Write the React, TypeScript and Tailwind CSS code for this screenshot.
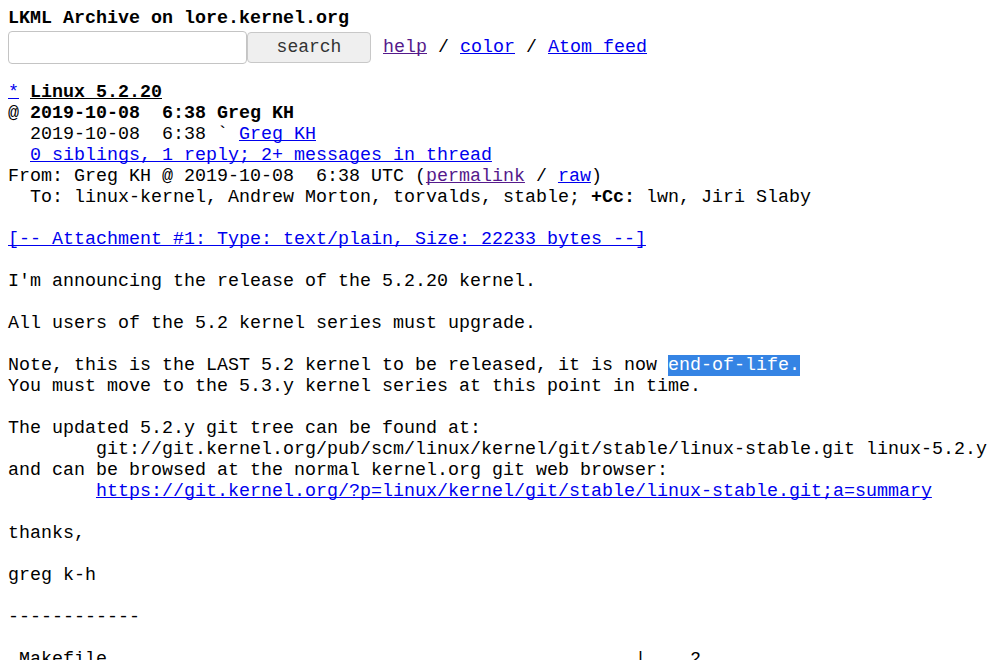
import React from "react";

const link = "text-[#0000ee] underline [text-decoration-skip-ink:none]";
const visited = "text-[#551a8b] underline [text-decoration-skip-ink:none]";

const Line = ({ children }: { children?: React.ReactNode }) => (
  <div className="h-[21px] whitespace-pre">{children}</div>
);

const App = () => {
  return (
    <main className="min-h-screen bg-white p-2 text-black font-['Liberation_Mono',monospace] text-[18.33px] leading-[21px]">
      <div className="font-bold whitespace-pre">LKML Archive on lore.kernel.org</div>
      <div className="mt-[2px] flex items-center h-[33px] whitespace-pre">
        <input
          type="text"
          className="w-[239px] h-[33px] border border-[#c4c4c4] rounded-[4px] bg-white"
        />
        <button className="w-[124px] h-[31px] border border-[#c8c8c8] rounded-[4px] bg-[#efefef] text-[#333] font-['Liberation_Mono',monospace] text-[18px]">
          search
        </button>
        <span className="ml-[12px]">
          <a className={visited}>help</a>
          {" / "}
          <a className={link}>color</a>
          {" / "}
          <a className={link}>Atom feed</a>
        </span>
      </div>

      <div className="mt-[18px]">
        <Line>
          <a className={link}>*</a>{" "}
          <b className="underline [text-decoration-skip-ink:none]">Linux 5.2.20</b>
        </Line>
        <Line>
          @ <b>2019-10-08  6:38 Greg KH</b>
        </Line>
        <Line>
          {"  2019-10-08  6:38 ` "}
          <a className={link}>Greg KH</a>
        </Line>
        <Line>
          {"  "}
          <a className={link}>0 siblings, 1 reply; 2+ messages in thread</a>
        </Line>
        <Line>
          {"From: Greg KH @ 2019-10-08  6:38 UTC ("}
          <a className={visited}>permalink</a>
          {" / "}
          <a className={link}>raw</a>)
        </Line>
        <Line>
          {"  To: linux-kernel, Andrew Morton, torvalds, stable; "}
          <b>+Cc:</b>
          {" lwn, Jiri Slaby"}
        </Line>
        <Line />
        <Line>
          <a className={link}>[-- Attachment #1: Type: text/plain, Size: 22233 bytes --]</a>
        </Line>
        <Line />
        <Line>I'm announcing the release of the 5.2.20 kernel.</Line>
        <Line />
        <Line>All users of the 5.2 kernel series must upgrade.</Line>
        <Line />
        <Line>
          {"Note, this is the LAST 5.2 kernel to be released, it is now "}
          <span className="bg-[#3584e4] text-white">end-of-life.</span>
        </Line>
        <Line>You must move to the 5.3.y kernel series at this point in time.</Line>
        <Line />
        <Line>The updated 5.2.y git tree can be found at:</Line>
        <Line>
          {"        git://git.kernel.org/pub/scm/linux/kernel/git/stable/linux-stable.git linux-5.2.y"}
        </Line>
        <Line>and can be browsed at the normal kernel.org git web browser:</Line>
        <Line>
          {"        "}
          <a className={link}>
            https://git.kernel.org/?p=linux/kernel/git/stable/linux-stable.git;a=summary
          </a>
        </Line>
        <Line />
        <Line>thanks,</Line>
        <Line />
        <Line>greg k-h</Line>
        <Line />
        <Line>------------</Line>
        <Line />
        <Line>{" Makefile                                                |    2"}</Line>
      </div>
    </main>
  );
};

export default App;
